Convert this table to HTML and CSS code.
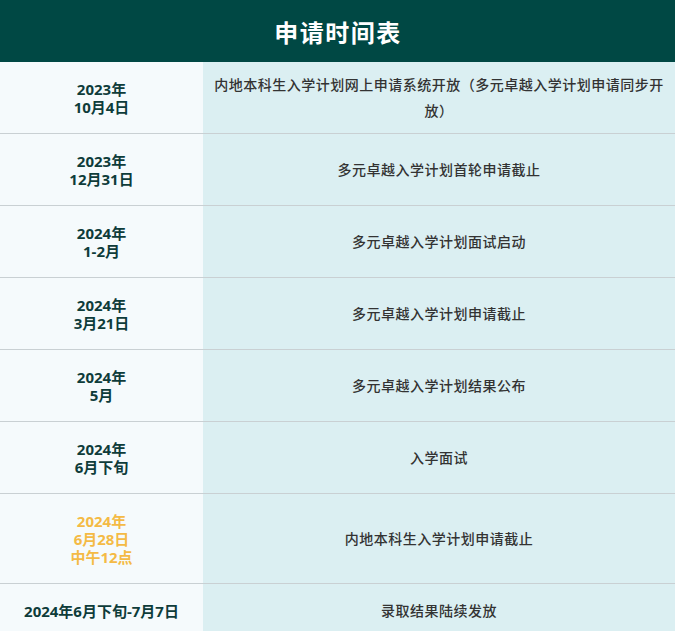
FILE: index.html
```html
<!DOCTYPE html>
<html lang="zh-CN">
<head>
<meta charset="utf-8">
<title>申请时间表</title>
<link rel="stylesheet" href="styles.css">
</head>
<body>
<div class="schedule">
  <div class="schedule-head">申请时间表</div>
  <div class="row">
    <div class="date"><span>2023年</span><span>10月4日</span></div>
    <div class="event">内地本科生入学计划网上申请系统开放（多元卓越入学计划申请同步开放）</div>
  </div>
  <div class="row">
    <div class="date"><span>2023年</span><span>12月31日</span></div>
    <div class="event">多元卓越入学计划首轮申请截止</div>
  </div>
  <div class="row">
    <div class="date"><span>2024年</span><span>1-2月</span></div>
    <div class="event">多元卓越入学计划面试启动</div>
  </div>
  <div class="row">
    <div class="date"><span>2024年</span><span>3月21日</span></div>
    <div class="event">多元卓越入学计划申请截止</div>
  </div>
  <div class="row">
    <div class="date"><span>2024年</span><span>5月</span></div>
    <div class="event">多元卓越入学计划结果公布</div>
  </div>
  <div class="row">
    <div class="date"><span>2024年</span><span>6月下旬</span></div>
    <div class="event">入学面试</div>
  </div>
  <div class="row">
    <div class="date date-highlight"><span>2024年</span><span>6月28日</span><span>中午12点</span></div>
    <div class="event">内地本科生入学计划申请截止</div>
  </div>
  <div class="row">
    <div class="date"><span>2024年6月下旬-7月7日</span></div>
    <div class="event">录取结果陆续发放</div>
  </div>
</div>
</body>
</html>
```

FILE: styles.css
```css
html, body {
  margin: 0;
  padding: 0;
  background: #ffffff;
}

body {
  font-family: "Open Sans", "Noto Sans CJK SC", sans-serif;
}

.schedule {
  width: 675px;
}

.schedule-head {
  height: 62px;
  background: #004844;
  color: #ffffff;
  font-family: "Noto Sans CJK SC", sans-serif;
  font-weight: 700;
  font-size: 24px;
  letter-spacing: 1.5px;
  display: flex;
  align-items: center;
  justify-content: center;
  padding-left: 1px;
  box-sizing: border-box;
}

.row {
  display: grid;
  grid-template-columns: 203px 1fr;
  border-bottom: 1px solid #c9d0d3;
}

.date {
  background: #f5fafc;
  color: #0e3c3a;
  font-family: "Open Sans", "Noto Sans CJK SC", sans-serif;
  font-weight: 700;
  font-size: 15px;
  line-height: 18px;
  padding: 18px 6px 17px;
  display: flex;
  flex-direction: column;
  align-items: center;
  justify-content: center;
  text-align: center;
}

.date-highlight {
  color: #f4ba45;
}

.event {
  background: #dbeff2;
  color: #333333;
  font-family: "Noto Sans CJK SC", sans-serif;
  font-weight: 500;
  font-size: 14px;
  letter-spacing: 0.5px;
  line-height: 26px;
  padding: 9px 10px 10px;
  display: flex;
  align-items: center;
  justify-content: center;
  text-align: center;
}
```
